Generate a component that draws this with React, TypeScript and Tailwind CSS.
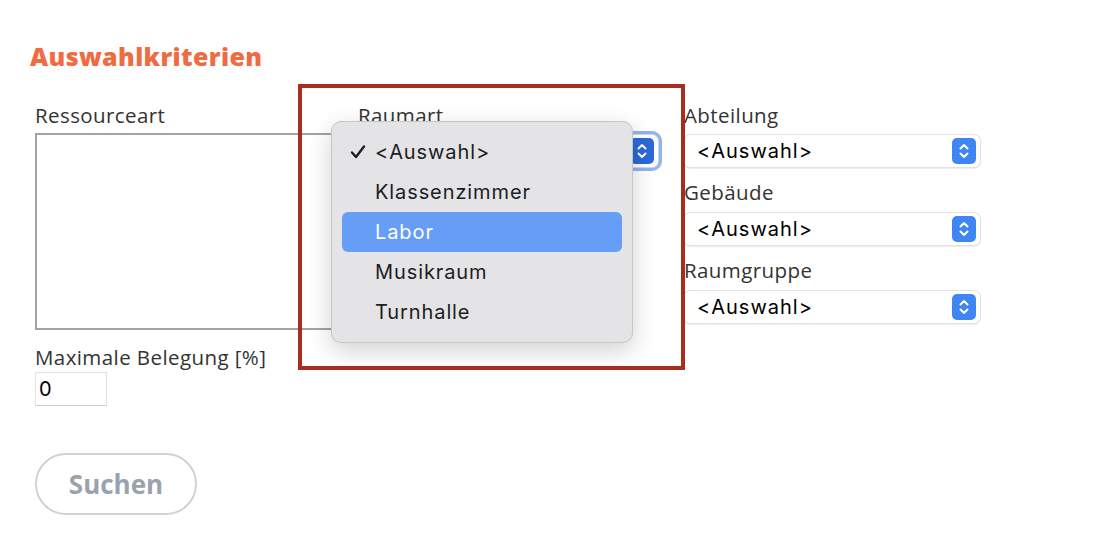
import React from "react";

const labelFont = { fontFamily: "'Open Sans', Lato, sans-serif" };
const sysFont = { fontFamily: "Inter, 'Liberation Sans', sans-serif" };

function Stepper({ dark }: { dark?: boolean }) {
  return (
    <svg width="24" height="26" viewBox="0 0 24 26" className="shrink-0">
      <rect x="0" y="0" width="24" height="26" rx="5" fill={dark ? "#2b6ad8" : "#3f86f4"} />
      <path d="M8.5 10.5 L12 7 L15.5 10.5" fill="none" stroke="white" strokeWidth="2" strokeLinecap="round" strokeLinejoin="round" />
      <path d="M8.5 15.5 L12 19 L15.5 15.5" fill="none" stroke="white" strokeWidth="2" strokeLinecap="round" strokeLinejoin="round" />
    </svg>
  );
}

function Select({ focused }: { focused?: boolean }) {
  return (
    <div
      className={
        "flex h-[32px] items-center justify-between rounded-[6px] bg-white pl-[13px] pr-[4px] " +
        (focused
          ? "shadow-[0_0_0_1px_#cfd8e6,0_0_0_4px_#8fb3f3]"
          : "shadow-[0_0_0_1px_#e2e2e2,0_1px_2px_rgba(0,0,0,0.25)]")
      }
    >
      <span className="text-[20px] leading-none tracking-[0.05em] text-black" style={sysFont}>
        &lt;Auswahl&gt;
      </span>
      <Stepper dark={focused} />
    </div>
  );
}

function Label({ children }: { children: React.ReactNode }) {
  return (
    <div className="h-[24px] text-[20.5px] leading-[24px] tracking-[0.02em] text-[#333333]" style={labelFont}>
      {children}
    </div>
  );
}

export default function App() {
  const items = ["<Auswahl>", "Klassenzimmer", "Labor", "Musikraum", "Turnhalle"];
  return (
    <div className="relative h-[546px] w-[1102px] overflow-hidden bg-white">
      <div className="pl-[30px] pt-[40px]">
        <h1
          className="text-[25px] font-extrabold leading-[32px] tracking-[0.015em] text-[#ef6b42]"
          style={labelFont}
        >
          Auswahlkriterien
        </h1>
        <div className="mt-[31px] flex">
          {/* column 1 */}
          <div className="ml-[5px] flex w-[305px] flex-col">
            <Label>Ressourceart</Label>
            <div className="mt-[6px] h-[197px] w-[305px] border-2 border-[#a3a3a3] bg-white" />
            <div className="mt-[15px]">
              <Label>Maximale Belegung [%]</Label>
            </div>
            <div
              className="mt-[3px] flex h-[34px] w-[72px] items-center border border-[#e2e2e2] border-b-[#c9c9c9] pl-[3px] text-[20px] text-black"
              style={sysFont}
            >
              0
            </div>
            <button
              className="mt-[47px] flex h-[62px] w-[162px] items-center justify-center rounded-full border-2 border-[#cdd3d9] bg-white text-[26px] font-bold text-[#99a3ad]"
              style={labelFont}
            >
              Suchen
            </button>
          </div>
          {/* column 2 */}
          <div className="ml-[18px] flex w-[300px] flex-col">
            <Label>Raumart</Label>
            <div className="mt-[8px]">
              <Select focused />
            </div>
          </div>
          {/* column 3 */}
          <div className="ml-[26px] flex w-[296px] flex-col">
            <Label>Abteilung</Label>
            <div className="mt-[8px]">
              <Select />
            </div>
            <div className="mt-[13px]">
              <Label>Gebäude</Label>
            </div>
            <div className="mt-[9px]">
              <Select />
            </div>
            <div className="mt-[13px]">
              <Label>Raumgruppe</Label>
            </div>
            <div className="mt-[9px]">
              <Select />
            </div>
          </div>
        </div>
      </div>

      {/* dropdown popup */}
      <div className="absolute left-[331px] top-[121px] w-[302px] rounded-[10px] border border-[#c6c6c8] bg-[#e4e4e6] px-[10px] py-[10px] shadow-[0_8px_24px_rgba(0,0,0,0.18)]">
        {items.map((it) => (
          <div
            key={it}
            className={
              "relative flex h-[40px] items-center rounded-[6px] pl-[33px] text-[20px] tracking-[0.045em] " +
              (it === "Labor" ? "bg-[#669df6] text-white" : "text-[#1d1d1f]")
            }
            style={sysFont}
          >
            {it === "<Auswahl>" && (
              <svg className="absolute left-[8px] top-[12px]" width="16" height="16" viewBox="0 0 16 16">
                <path d="M2 8.5 L6 13 L14 2.5" fill="none" stroke="#1d1d1f" strokeWidth="2.4" strokeLinecap="round" strokeLinejoin="round" />
              </svg>
            )}
            {it}
          </div>
        ))}
      </div>

      {/* red annotation frame */}
      <div className="pointer-events-none absolute left-[298px] top-[84px] h-[286px] w-[387px] border-[4px] border-[#a72d1e]" />
    </div>
  );
}
